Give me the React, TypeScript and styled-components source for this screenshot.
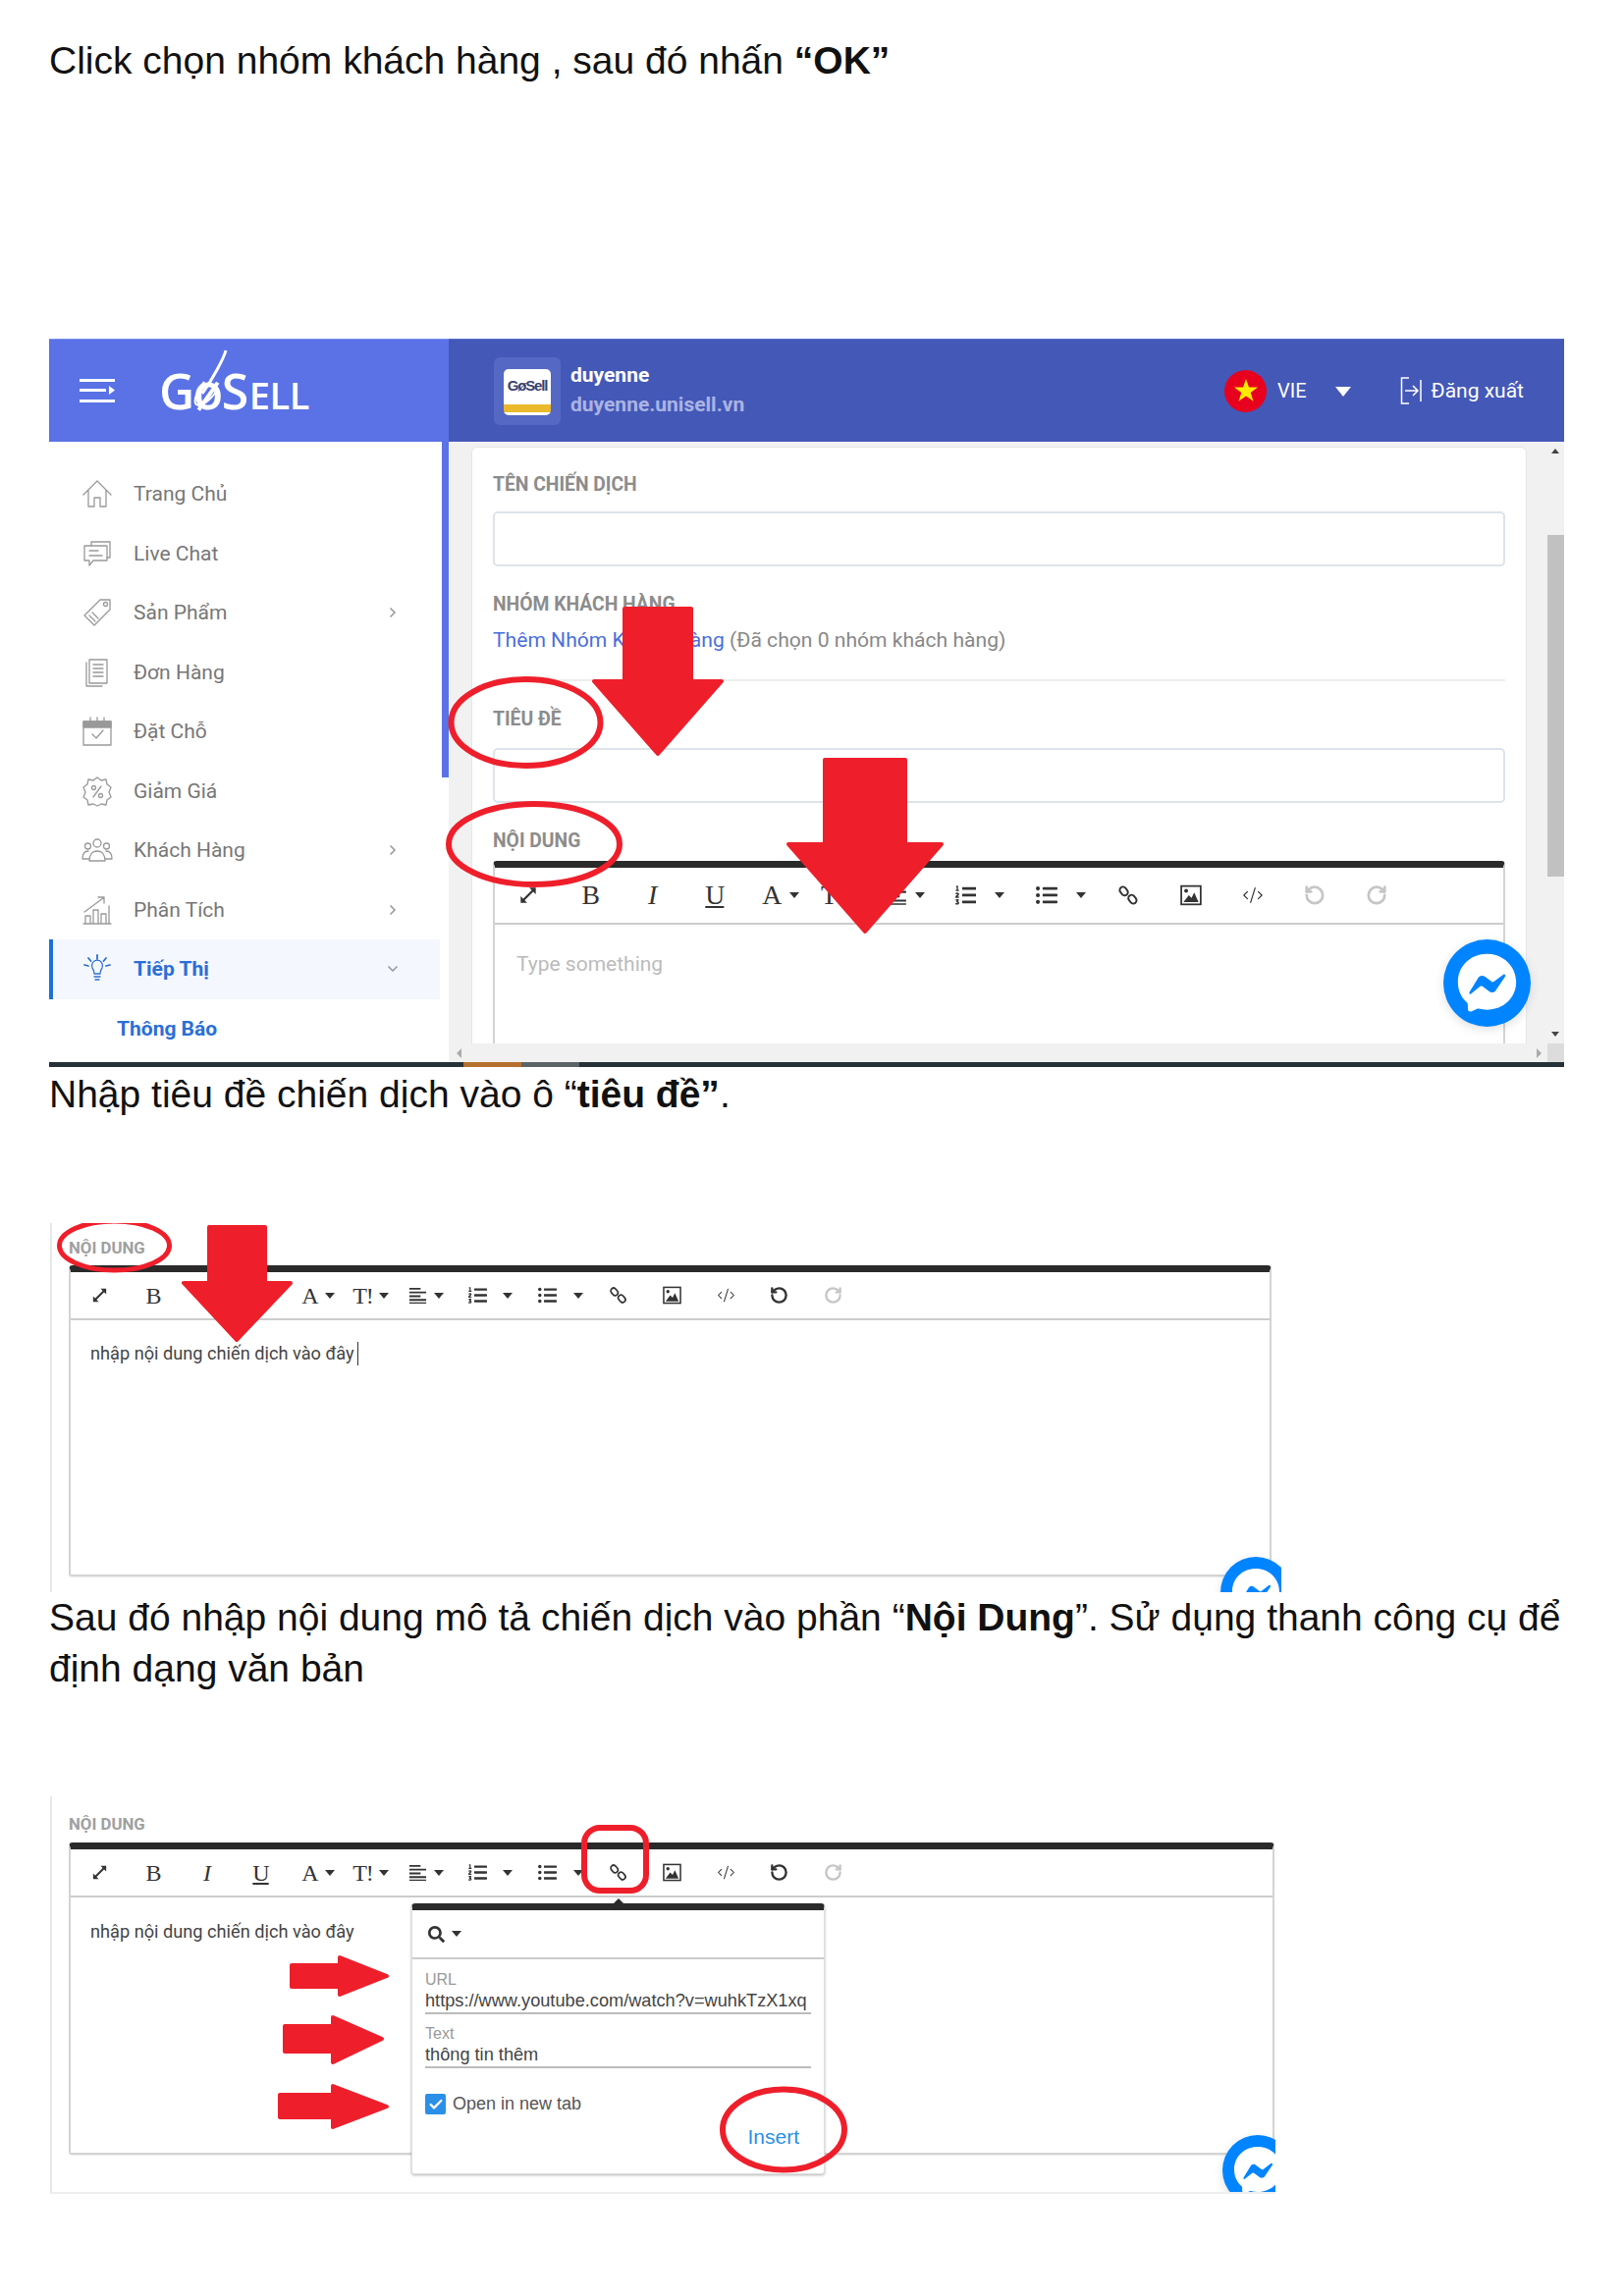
import React from 'react';
import styled, { createGlobalStyle } from 'styled-components';
import {
  Check,
  ChevronDown,
  ChevronRight,
  CodeXml,
  RotateCcw,
  RotateCw,
} from 'lucide-react';
import { FaListOl, FaListUl, FaSearch } from 'react-icons/fa';

const GlobalStyle = createGlobalStyle`
  html, body { margin: 0; padding: 0; background: #fff; }
  body { font-family: "Liberation Sans", Arial, sans-serif; color: #111; }
  * { box-sizing: border-box; }
`;

const RED = '#ee1f2b';

const Page = styled.div`
  width: 1654px;
  height: 2339px;
  padding: 36px 0 0 50px;
  overflow: hidden;
`;

const Para = styled.p<{ $top?: number; $bottom?: number }>`
  margin: ${(p) => p.$top ?? 0}px 0 ${(p) => p.$bottom ?? 0}px;
  width: 1560px;
  font-size: 39px;
  line-height: 52px;
  color: #111;
`;

const Shot = styled.section<{ $w: number; $h: number }>`
  position: relative;
  width: ${(p) => p.$w}px;
  height: ${(p) => p.$h}px;
  overflow: hidden;
  font-family: Roboto, "Noto Sans", sans-serif;
`;

const Marks = styled.svg`
  position: absolute;
  inset: 0;
  width: 100%;
  height: 100%;
  pointer-events: none;
  z-index: 5;
`;

/* app header */
const Header = styled.header`
  display: flex;
  height: 105px;
  color: #fff;
`;

const Brand = styled.div`
  display: flex;
  align-items: center;
  width: 407px;
  padding-left: 31px;
  gap: 45px;
  background: #5a72e6;
  border-top: 1px solid #7a8eee;
`;

const Logo = styled.div`
  position: relative;
  display: flex;
  align-items: baseline;
  margin-top: 3px;
  font-family: "Open Sans", sans-serif;
  font-weight: 600;
  font-size: 50px;
  line-height: 50px;
  letter-spacing: -1.5px;
  small { font-size: 38px; letter-spacing: -0.5px; margin-left: 2px; }
  svg { position: absolute; left: 32px; top: -18px; }
`;

const TopBar = styled.div`
  flex: 1;
  display: flex;
  align-items: center;
  padding: 0 41px 0 46px;
  background: #4458b8;
  border-top: 1px solid #5a6cc6;
`;

const Tile = styled.div`
  width: 68px;
  height: 69px;
  padding: 12px 10px;
  border-radius: 6px;
  background: #5468c4;
`;

const TileLogo = styled.div`
  height: 47px;
  border-radius: 5px;
  background: linear-gradient(#fff 0 36px, #eab92c 36px 44px, #fff 44px);
  color: #3a3f6e;
  font-family: "Liberation Sans", sans-serif;
  font-weight: 700;
  font-size: 15px;
  line-height: 34px;
  letter-spacing: -1.2px;
  text-align: center;
`;

const Account = styled.div`
  margin: -2px 0 0 10px;
  font-weight: 700;
  font-size: 21px;
  line-height: 30px;
  span { display: block; }
  span + span { color: #aab4e2; }
`;

const Lang = styled.div`
  margin-left: auto;
  display: flex;
  align-items: center;
  font-size: 20px;
`;

const Flag = styled.span`
  display: flex;
  align-items: center;
  justify-content: center;
  width: 43px;
  height: 43px;
  margin-right: 11px;
  border-radius: 50%;
  background: #e8001f;
`;

const CaretDown = styled.i<{ $w?: number; $color?: string }>`
  display: inline-block;
  width: 0;
  height: 0;
  border-left: ${(p) => p.$w ?? 8}px solid transparent;
  border-right: ${(p) => p.$w ?? 8}px solid transparent;
  border-top: ${(p) => ((p.$w ?? 8) * 5) / 4}px solid ${(p) => p.$color ?? '#fff'};
`;

const LangCaret = styled.span`
  margin: 2px 50px 0 29px;
  display: flex;
`;

const Logout = styled.div`
  display: flex;
  align-items: center;
  gap: 10px;
  font-size: 21px;
`;

/* sidebar + content */
const Body = styled.div`
  display: flex;
  height: 632px;
`;

const Sidebar = styled.aside`
  display: flex;
  width: 407px;
  background: #fff;
`;

const Nav = styled.nav`
  width: 400px;
  padding-top: 23px;
`;

const SideThumb = styled.div`
  width: 7px;
  height: 342px;
  background: #5a72e6;
`;

const NavItem = styled.div<{ $active?: boolean; $sub?: boolean }>`
  display: flex;
  align-items: center;
  height: 60.5px;
  padding-left: ${(p) => (p.$sub ? 69 : p.$active ? 29 : 33)}px;
  width: 398px;
  gap: 21px;
  font-size: 21px;
  font-weight: ${(p) => (p.$active || p.$sub ? 700 : 400)};
  color: ${(p) => (p.$active || p.$sub ? '#2a6fd6' : '#777')};
  background: ${(p) => (p.$active ? '#f4f7fd' : 'transparent')};
  border-left: ${(p) => (p.$active ? '4px solid #1f6fd8' : 'none')};
  svg.ico { flex: none; color: ${(p) => (p.$active ? '#2a6fd6' : '#999')}; }
  svg.chev { margin-left: auto; margin-right: 40px; color: #999; }
`;

const Main = styled.div`
  flex: 1;
  display: flex;
  flex-direction: column;
  min-width: 0;
  background: #f1f1f1;
`;

const MainRow = styled.div`
  flex: 1;
  display: flex;
  min-height: 0;
`;

const Panel = styled.div`
  width: 1075px;
  margin: 5px 21px 0 23px;
  padding: 27px 21px 0 21px;
  background: #fff;
  border: 1px solid #e6e6e6;
  border-bottom: 0;
  border-radius: 6px 6px 0 0;
  overflow: hidden;
`;

const Label = styled.div<{ $size?: number; $top?: number; $faint?: boolean }>`
  margin-top: ${(p) => p.$top ?? 0}px;
  font-size: ${(p) => p.$size ?? 19.3}px;
  font-weight: 700;
  line-height: 22px;
  color: ${(p) => (p.$faint ? '#a0a0a0' : '#8c8c8c')};
`;

const Input = styled.div<{ $top: number }>`
  margin-top: ${(p) => p.$top}px;
  height: 56px;
  border: 2px solid #dde3ea;
  border-radius: 5px;
`;

const GroupLine = styled.div`
  margin-top: 13px;
  padding-bottom: 28px;
  border-bottom: 2px solid #eee;
  font-size: 21.100px;
  line-height: 24px;
  color: #888;
  a { color: #4a6fdc; }
`;

const VScroll = styled.div`
  position: relative;
  flex: none;
  width: 17px;
  background: #f1f1f1;
  &::before {
    content: '';
    position: absolute;
    left: 4px;
    top: 7px;
    border: 4px solid transparent;
    border-top: 0;
    border-bottom: 5px solid #444;
  }
  &::after {
    content: '';
    position: absolute;
    left: 4px;
    bottom: 7px;
    border: 4px solid transparent;
    border-bottom: 0;
    border-top: 5px solid #444;
  }
`;

const VThumb = styled.div`
  margin-top: 95px;
  height: 348px;
  background: #c1c1c1;
`;

const HScroll = styled.div`
  flex: none;
  display: flex;
  align-items: center;
  height: 19px;
  padding-left: 8px;
  background: #f1f1f1;
  i {
    border: 5px solid transparent;
    border-left: 0;
    border-right: 5px solid #aaa;
  }
  i + i {
    margin-left: auto;
    margin-right: 6px;
    border-right: 0;
    border-left: 5px solid #aaa;
  }
  b { width: 17px; height: 19px; background: #dcdcdc; }
`;

const TaskStrip = styled.div`
  height: 5px;
  background: linear-gradient(
    90deg,
    #263238 0 422px,
    #b5702d 422px 481px,
    #5d6468 481px 540px,
    #263238 540px
  );
`;

/* rich text editor, shared by the three shots */
const Editor = styled.div<{ $u: number; $w?: number; $h?: number; $top?: number }>`
  --u: ${(p) => p.$u};
  position: relative;
  width: ${(p) => (p.$w ? `${p.$w}px` : 'auto')};
  height: ${(p) => (p.$h ? `${p.$h}px` : 'auto')};
  margin-top: ${(p) => p.$top ?? 0}px;
  border: 2px solid #d4d4d4;
  border-top: 7px solid #2a2a2a;
  border-radius: 4px 4px 3px 3px;
  box-shadow: 0 1px 1px rgba(0, 0, 0, 0.08);
`;

const ToolBar = styled.div<{ $h: number }>`
  display: flex;
  align-items: center;
  height: ${(p) => p.$h}px;
  padding-left: calc(var(--u) * 19px);
  border-bottom: 2px solid #ccc;
  color: #333;
`;

const Tool = styled.span<{ $w: number; $off?: boolean }>`
  display: flex;
  align-items: center;
  flex: none;
  width: calc(var(--u) * ${(p) => p.$w}px);
  color: ${(p) => (p.$off ? '#c6c6c6' : '#333')};
`;

const Glyph = styled.span<{ $italic?: boolean; $line?: boolean }>`
  display: flex;
  align-items: center;
  justify-content: center;
  flex: none;
  width: calc(var(--u) * 20px);
  font-family: "Liberation Serif", serif;
  font-size: calc(var(--u) * 24px);
  line-height: 1;
  letter-spacing: -1px;
  font-style: ${(p) => (p.$italic ? 'italic' : 'normal')};
  text-decoration: ${(p) => (p.$line ? 'underline' : 'none')};
  svg { width: calc(var(--u) * 19px); height: calc(var(--u) * 19px); }
`;

const ToolCaret = styled.span<{ $gap: number }>`
  display: flex;
  justify-content: center;
  flex: none;
  width: calc(var(--u) * 10px);
  margin-left: calc(var(--u) * ${(p) => p.$gap - 15}px);
`;

const EditorText = styled.div<{ $top: number; $left: number; $size: number; $hint?: boolean }>`
  padding: ${(p) => p.$top}px 0 0 ${(p) => p.$left}px;
  font-size: ${(p) => p.$size}px;
  line-height: 24px;
  color: ${(p) => (p.$hint ? '#bbb' : '#444')};
`;

const TextCursor = styled.span`
  display: inline-block;
  width: 1px;
  height: 24px;
  margin-left: 3px;
  vertical-align: top;
  background: #333;
`;

/* second and third shot frames */
const PlainShot = styled(Shot)<{ $pad: number; $left: number; $closed?: boolean }>`
  padding: ${(p) => p.$pad}px 0 0 ${(p) => p.$left}px;
  margin-left: 1px;
  border-left: 2px solid #e8e8e8;
  border-bottom: ${(p) => (p.$closed ? '2px solid #eee' : 'none')};
`;

const Bubble = styled.div<{ $x: number; $y: number; $d: number }>`
  position: absolute;
  left: ${(p) => p.$x}px;
  top: ${(p) => p.$y}px;
  width: ${(p) => p.$d}px;
  height: ${(p) => p.$d}px;
  filter: drop-shadow(0 3px 5px rgba(0, 0, 0, 0.12));
  z-index: 4;
`;

/* link popover */
const Popup = styled.div`
  position: absolute;
  left: 347px;
  top: 55px;
  width: 421px;
  height: 276px;
  background: #fff;
  border: 1px solid #ddd;
  border-top: 7px solid #2a2a2a;
  border-radius: 4px 4px 3px 3px;
  box-shadow: 0 1px 3px rgba(0, 0, 0, 0.3);
  font-family: "Liberation Sans", sans-serif;
  &::before {
    content: '';
    position: absolute;
    left: 204px;
    top: -12px;
    border: 6px solid transparent;
    border-top: 0;
    border-bottom: 6px solid #2a2a2a;
  }
`;

const PopupSearch = styled.div`
  display: flex;
  align-items: center;
  gap: 7px;
  height: 50px;
  padding-left: 16px;
  border-bottom: 2px solid #ccc;
  color: #333;
`;

const PopupBody = styled.div`
  padding: 11px 13px 0;
`;

const FieldLabel = styled.div<{ $top?: number }>`
  margin-top: ${(p) => p.$top ?? 0}px;
  font-size: 16px;
  line-height: 19px;
  color: #999;
`;

const FieldValue = styled.div`
  height: 26px;
  font-size: 18.200px;
  line-height: 24px;
  color: #444;
  white-space: nowrap;
  overflow: hidden;
  border-bottom: 2px solid #bbb;
`;

const CheckRow = styled.div`
  display: flex;
  align-items: center;
  gap: 7px;
  margin-top: 26px;
  font-size: 18px;
  color: #555;
`;

const CheckBox = styled.span`
  display: flex;
  align-items: center;
  justify-content: center;
  width: 21px;
  height: 21px;
  border-radius: 2px;
  background: #2b8fe8;
  color: #fff;
`;

const InsertBtn = styled.div`
  margin: 9px 12px 0 0;
  text-align: right;
  font-size: 21px;
  line-height: 28px;
  color: #2b8fe8;
`;

function ExpandIcon() {
  return (
    <svg viewBox="0 0 20 20" fill="currentColor">
      <path d="M5 15 15 5" stroke="currentColor" strokeWidth="2" />
      <path d="M11 3h6v6zM9 17H3v-6z" />
    </svg>
  );
}

function AlignIcon() {
  return (
    <svg viewBox="0 0 20 20" fill="currentColor">
      <path d="M1 2h12v2H1zM1 6h18v2H1zM1 10h12v2H1zM1 14h18v2H1zM1 17.500h18v1.500H1z" />
    </svg>
  );
}

function LinkIcon() {
  return (
    <svg viewBox="0 0 20 20" fill="none" stroke="currentColor" strokeWidth="1.800">
      <rect x="3" y="2" width="6" height="8.500" rx="3" transform="rotate(-40 6 6.250)" />
      <rect x="11" y="9.500" width="6" height="8.500" rx="3" transform="rotate(-40 14 13.750)" />
    </svg>
  );
}

function ImageIcon() {
  return (
    <svg viewBox="0 0 20 20">
      <rect x="1" y="1.500" width="18" height="17" fill="none" stroke="currentColor" strokeWidth="1.600" />
      <circle cx="5.500" cy="6" r="1.800" fill="currentColor" />
      <path d="M3 16.500 8 10l2.500 2.500L13 7.500l4 9z" fill="currentColor" />
    </svg>
  );
}

function Toolbar({ height, showAll }: { height: number; showAll?: boolean }) {
  const c = <CaretDown $w={5} $color="#333" />;
  return (
    <ToolBar $h={height}>
      <Tool $w={55}><Glyph><ExpandIcon /></Glyph></Tool>
      <Tool $w={54.500}><Glyph>B</Glyph></Tool>
      <Tool $w={55}><Glyph $italic>I</Glyph></Tool>
      <Tool $w={50}><Glyph $line>U</Glyph></Tool>
      <Tool $w={54}><Glyph>A</Glyph><ToolCaret $gap={20}>{c}</ToolCaret></Tool>
      <Tool $w={56}><Glyph>T!</Glyph><ToolCaret $gap={21}>{c}</ToolCaret></Tool>
      <Tool $w={61}><Glyph><AlignIcon /></Glyph><ToolCaret $gap={21}>{c}</ToolCaret></Tool>
      <Tool $w={71}><Glyph><FaListOl /></Glyph><ToolCaret $gap={30}>{c}</ToolCaret></Tool>
      <Tool $w={72}><Glyph><FaListUl /></Glyph><ToolCaret $gap={31}>{c}</ToolCaret></Tool>
      <Tool $w={55}><Glyph><LinkIcon /></Glyph></Tool>
      <Tool $w={55}><Glyph><ImageIcon /></Glyph></Tool>
      <Tool $w={54}><Glyph><CodeXml strokeWidth={1.300} /></Glyph></Tool>
      <Tool $w={55} $off={!showAll}><Glyph><RotateCcw strokeWidth={3} /></Glyph></Tool>
      <Tool $w={20} $off><Glyph><RotateCw strokeWidth={3} /></Glyph></Tool>
    </ToolBar>
  );
}

function MessengerBubble() {
  return (
    <svg viewBox="0 0 90 90" width="100%" height="100%">
      <circle cx="45" cy="45" r="45" fill="#0084ff" />
      <path
        d="M45 15c-17 0-30 12.500-30 29 0 8.700 3.600 16 9.300 21 .5.400.8 1 .8 1.700l.2 5.400c.1 1.700 1.800 2.800 3.400 2.100l6-2.700c.5-.2 1.100-.3 1.600-.1 2.800.8 5.700 1.100 8.700 1.100 17 0 30-12.500 30-28.500S62 15 45 15z"
        fill="#fff"
      />
      <path d="M27 54l9-14.500c1.400-2.300 4.500-2.900 6.700-1.200l7.100 5.300c.7.500 1.600.5 2.200 0l9.600-7.300c1.300-1 3 .6 2.100 1.900L54 52.500c-1.400 2.300-4.500 2.900-6.700 1.200l-7.100-5.300c-.7-.5-1.600-.5-2.200 0L28.400 56c-1.300 1-2.200-.6-1.400-2z" fill="#0084ff" />
    </svg>
  );
}

const NavIcon = styled.svg.attrs({
  className: 'ico',
  width: 32,
  height: 32,
  viewBox: '0 0 32 32',
  fill: 'none',
  stroke: 'currentColor',
  strokeWidth: 1.300,
  strokeLinejoin: 'round',
  strokeLinecap: 'round',
})``;

const HomeIcon = () => (
  <NavIcon>
    <path d="M2 17 16 3l14 14M7 13v16h6v-9h6v9h6V13" />
  </NavIcon>
);

const ChatIcon = () => (
  <NavIcon>
    <path d="M10 8V4h19v16h-3" />
    <path d="M3 8h23v15H12l-4 5v-5H3zM8 13h9M8 18h13" />
  </NavIcon>
);

const TagIcon = () => (
  <NavIcon>
    <path d="M19 3h10v10L13 29 3 19zM8 19l6 6M11 16l6 6" />
    <circle cx="24.500" cy="7.500" r="2" />
  </NavIcon>
);

const OrderIcon = () => (
  <NavIcon>
    <path d="M8 3h18v24H8zM5 6v24h16M12 8h10M12 12h10M12 16h10M12 20h10" />
  </NavIcon>
);

const CalendarIcon = () => (
  <NavIcon>
    <path d="M2 6h28v24H2zM11 19l4 4 7-8" />
    <path d="M2 6h28v6H2z" fill="currentColor" />
    <path d="M9 2v6M23 2v6M16 2v6" />
  </NavIcon>
);

const PercentIcon = () => (
  <NavIcon>
    <path d="M16 2l4 3 5-1 1 5 4 3-2 5 2 5-4 3-1 5-5-1-4 2-4-2-5 1-1-5-4-3 2-5-2-5 4-3 1-5 5 1z" />
    <path d="M20 11l-8 11" />
    <circle cx="12.500" cy="12.500" r="2" />
    <circle cx="19.500" cy="20.500" r="2" />
  </NavIcon>
);

const PeopleIcon = () => (
  <NavIcon>
    <circle cx="16" cy="9" r="4" />
    <circle cx="6.500" cy="12" r="3" />
    <circle cx="25.500" cy="12" r="3" />
    <path d="M8 27c0-6 3-10 8-10s8 4 8 10zM7 25H1c0-5 2-8 6-8M25 25h6c0-5-2-8-6-8" />
  </NavIcon>
);

const ChartIcon = () => (
  <NavIcon>
    <path d="M2 30h28M4 30v-8h5v8M12 30V16h5v14M20 30V20h5v10M28 30V12" />
    <path d="M3 18 22 4M17 3h6v6" />
  </NavIcon>
);

const BulbIcon = () => (
  <NavIcon>
    <path d="M11 15a5.500 5.500 0 1 1 10 0c-1 2-2 3-2 6h-6c0-3-1-4-2-6zM13 24h6M14 27h4" />
    <path d="M16 2v4M7 5l2.500 3M25 5l-2.500 3M3 12l4 1M29 12l-4 1" strokeWidth="1.800" />
  </NavIcon>
);

const NAV = [
  { label: 'Trang Chủ', Icon: HomeIcon },
  { label: 'Live Chat', Icon: ChatIcon },
  { label: 'Sản Phẩm', Icon: TagIcon, more: true },
  { label: 'Đơn Hàng', Icon: OrderIcon },
  { label: 'Đặt Chỗ', Icon: CalendarIcon },
  { label: 'Giảm Giá', Icon: PercentIcon },
  { label: 'Khách Hàng', Icon: PeopleIcon, more: true },
  { label: 'Phân Tích', Icon: ChartIcon, more: true },
];

function App(): React.JSX.Element {
  return (
    <Page>
      <GlobalStyle />
      <Para $bottom={257}>
        Click chọn nhóm khách hàng , sau đó nhấn <b>“OK”</b>
      </Para>

      <Shot $w={1543} $h={742}>
        <Header>
          <Brand>
            <svg width="36" height="26" viewBox="0 0 36 26" fill="#fff">
              <path d="M0 1h36v3H0zM0 11h27v3H0zM0 22h36v3H0zM30 8l6 4.500-6 4.500z" />
            </svg>
            <Logo>
              GøS<small>ELL</small>
              <svg width="40" height="62" viewBox="0 0 40 62" fill="none" stroke="#fff" strokeWidth="2">
                <path d="M36 2c-2 8-14 30-24 44" strokeWidth="3" />
                <path d="M14 34C4 46 2 58 8 58s14-8 18-14" />
              </svg>
            </Logo>
          </Brand>
          <TopBar>
            <Tile>
              <TileLogo>GøSell</TileLogo>
            </Tile>
            <Account>
              <span>duyenne</span>
              <span>duyenne.unisell.vn</span>
            </Account>
            <Lang>
              <Flag>
                <svg width="26" height="26" viewBox="0 0 26 26">
                  <path d="M13 1l3 8.600h9l-7.300 5.400 2.800 8.800L13 18.400l-7.500 5.400 2.800-8.800L1 9.600h9z" fill="#ffeb00" />
                </svg>
              </Flag>
              VIE
              <LangCaret><CaretDown /></LangCaret>
            </Lang>
            <Logout>
              <svg width="22" height="32" viewBox="0 0 22 32" fill="none" stroke="#fff" strokeWidth="1.500">
                <path d="M9 3H1.500v26H9M21 5v22M5 16h13M13 11l5 5-5 5" />
              </svg>
              Đăng xuất
            </Logout>
          </TopBar>
        </Header>

        <Body>
          <Sidebar>
            <Nav>
              {NAV.map(({ label, Icon, more }) => (
                <NavItem key={label}>
                  <Icon />
                  {label}
                  {more && <ChevronRight className="chev" size={16} strokeWidth={2.500} />}
                </NavItem>
              ))}
              <NavItem $active>
                <BulbIcon />
                Tiếp Thị
                <ChevronDown className="chev" size={16} strokeWidth={2.500} />
              </NavItem>
              <NavItem $sub>Thông Báo</NavItem>
            </Nav>
            <SideThumb />
          </Sidebar>
          <Main>
            <MainRow>
              <Panel>
                <Label>TÊN CHIẾN DỊCH</Label>
                <Input $top={16} />
                <Label $top={28}>NHÓM KHÁCH HÀNG</Label>
                <GroupLine>
                  <a>Thêm Nhóm Khách Hàng</a> (Đã chọn 0 nhóm khách hàng)
                </GroupLine>
                <Label $top={28}>TIÊU ĐỀ</Label>
                <Input $top={18} />
                <Label $top={28}>NỘI DUNG</Label>
                <Editor $u={1.157} $top={9} $h={300}>
                  <Toolbar height={58} />
                  <EditorText $hint $top={28} $left={22} $size={21}>Type something</EditorText>
                </Editor>
              </Panel>
              <VScroll><VThumb /></VScroll>
            </MainRow>
            <HScroll><i /><i /><b /></HScroll>
          </Main>
        </Body>
        <TaskStrip />

        <Bubble $x={1420} $y={612} $d={89}><MessengerBubble /></Bubble>

        <Marks viewBox="50 345 1543 742">
          <g fill="none" stroke={RED} strokeWidth="6">
            <ellipse cx="535.500" cy="736" rx="76" ry="44" />
            <ellipse cx="544" cy="860" rx="87" ry="41" />
          </g>
          <g fill={RED} stroke={RED} strokeWidth="4" strokeLinejoin="round">
            <polygon points="636,620 704,620 704,694 735,694 670,768 605,694 636,694" />
            <polygon points="840,774 922,774 922,860 959,860 881,949 803,860 840,860" />
          </g>
        </Marks>
      </Shot>

      <Para $top={2} $bottom={105}>
        Nhập tiêu đề chiến dịch vào ô “<b>tiêu đề”</b>.
      </Para>

      <PlainShot $w={1254} $h={376} $pad={14} $left={17}>
        <Label $size={16.800} $faint>NỘI DUNG</Label>
        <Editor $u={1} $top={7} $w={1225} $h={317}>
          <Toolbar height={49} showAll />
          <EditorText $top={22} $left={20} $size={18.200}>
            nhập nội dung chiến dịch vào đây<TextCursor />
          </EditorText>
        </Editor>
        <Bubble $x={1190} $y={340} $d={72}><MessengerBubble /></Bubble>
        <Marks viewBox="53 1246 1252 376">
          <ellipse cx="116.500" cy="1269" rx="56" ry="25" fill="none" stroke={RED} strokeWidth="5" />
          <polygon
            points="213,1250 270,1250 270,1307 296,1307 241,1365 187,1307 213,1307"
            fill={RED}
            stroke={RED}
            strokeWidth="4"
            strokeLinejoin="round"
          />
        </Marks>
      </PlainShot>

      <Para $bottom={104}>
        Sau đó nhập nội dung mô tả chiến dịch vào phần “<b>Nội Dung</b>”. Sử dụng thanh công cụ để định dạng văn bản
      </Para>

      <PlainShot $w={1248} $h={405} $pad={17} $left={17} $closed>
        <Label $size={16.800} $faint>NỘI DUNG</Label>
        <Editor $u={1} $top={8} $w={1228} $h={318}>
          <Toolbar height={49} showAll />
          <EditorText $top={23} $left={20} $size={18.200}>nhập nội dung chiến dịch vào đây</EditorText>
          <Popup>
            <PopupSearch>
              <FaSearch size={17} />
              <CaretDown $w={5} $color="#333" />
            </PopupSearch>
            <PopupBody>
              <FieldLabel>URL</FieldLabel>
              <FieldValue>https://www.youtube.com/watch?v=wuhkTzX1xq</FieldValue>
              <FieldLabel $top={10}>Text</FieldLabel>
              <FieldValue>thông tin thêm</FieldValue>
              <CheckRow>
                <CheckBox><Check size={16} strokeWidth={3.500} /></CheckBox>
                Open in new tab
              </CheckRow>
              <InsertBtn>Insert</InsertBtn>
            </PopupBody>
          </Popup>
        </Editor>
        <Bubble $x={1192} $y={345} $d={72}><MessengerBubble /></Bubble>
        <Marks viewBox="53 1830 1246 403">
          <g fill="none" stroke={RED} strokeWidth="6">
            <rect x="595" y="1862" width="63" height="64" rx="16" />
            <ellipse cx="798" cy="2169.500" rx="62" ry="41" />
          </g>
          <g fill={RED} stroke={RED} strokeWidth="4" strokeLinejoin="round">
            <polygon points="297,2002 346,2002 346,1994 394,2013 346,2032 346,2024 297,2024" />
            <polygon points="290,2064 339,2064 339,2055 389,2077 339,2101 339,2090 290,2090" />
            <polygon points="285,2134 339,2134 339,2125 394,2146 339,2167 339,2157 285,2157" />
          </g>
        </Marks>
      </PlainShot>
    </Page>
  );
}

export default App;
